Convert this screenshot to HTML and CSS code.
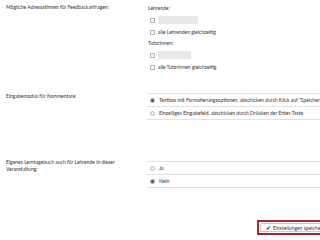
FILE: index.html
```html
<!DOCTYPE html>
<html lang="de">
<head>
    <meta charset="UTF-8">
    <meta name="viewport" content="width=device-width, initial-scale=1.0">
    <title>Einstellungen</title>
    <link rel="stylesheet" href="styles.css">
</head>
<body>

    <div class="page">

        <div class="form-row first">
            <div class="label">Mögliche Adressatinnen für Feedbackanfragen:</div>
            <div class="field checks">
                <div class="sub-title">Lehrende:</div>
                <div class="check-row"><span class="box"></span><span class="name-input"></span></div>
                <div class="check-row"><span class="box"></span>alle Lehrenden gleichzeitig</div>
                <div class="sub-title">TutorInnen:</div>
                <div class="check-row"><span class="box"></span><span class="name-input short"></span></div>
                <div class="check-row"><span class="box"></span>alle TutorInnen gleichzeitig</div>
            </div>
        </div>

        <div class="form-row second">
            <div class="label">Eingabemodus für Kommentare:</div>
            <ul class="field options">
                <li><span class="radio checked"></span>Textbox mit Formatierungsoptionen, abschicken durch Klick auf "Speichern"</li>
                <li><span class="radio"></span>Einzeiliges Eingabefeld, abschicken durch Drücken der Enter-Taste</li>
            </ul>
        </div>

        <div class="form-row third">
            <div class="label">Eigenes Lerntagebuch auch für Lehrende in dieser Veranstaltung:</div>
            <ul class="field options">
                <li><span class="radio"></span>Ja</li>
                <li><span class="radio checked"></span>Nein</li>
            </ul>
        </div>

        <div class="actions">
            <button class="save-btn" type="button"><span class="tick">✔</span>Einstellungen speichern</button>
        </div>

    </div>

</body>
</html>
```

FILE: styles.css
```css
/* Reset */
* {
    margin: 0;
    padding: 0;
    box-sizing: border-box;
}

html, body {
    overflow: hidden;
}

body {
    font-family: Lato, "Open Sans", sans-serif;
    font-size: 5px;
    color: #333;
    background: #fff;
}

.page {
    width: 360px;
}

/* Zeilen des Formulars */
.form-row {
    display: flex;
    align-items: flex-start;
}

.label {
    width: 147px;
    flex-shrink: 0;
    padding: 0 19px 0 6px;
    line-height: 7px;
}

.field {
    flex: 1;
}

.first .label {
    padding-top: 4px;
}

.checks {
    padding: 3px 0 0 1px;
}

.sub-title {
    height: 11px;
    line-height: 11px;
}

.check-row {
    height: 12px;
    display: flex;
    align-items: center;
    padding-left: 2px;
}

.box {
    width: 5px;
    height: 5px;
    border: 1px solid #b4b4b4;
    background: #fafafa;
    margin-right: 3px;
}

.name-input {
    width: 40px;
    height: 8px;
    background: #e8e8e8;
}

.name-input.short {
    width: 33px;
}

/* Radio-Listen */
.second {
    margin-top: 20px;
}

.third {
    margin-top: 41px;
}

.third .label {
    margin-top: -2px;
}

.options {
    list-style: none;
    border-top: 1px solid #e2e2e2;
}

.options li {
    height: 13px;
    display: flex;
    align-items: center;
    padding-left: 3px;
    border-bottom: 1px solid #e2e2e2;
    white-space: nowrap;
}

.radio {
    width: 5px;
    height: 5px;
    border-radius: 50%;
    border: 1px solid #b4b4b4;
    background: #f8f8f8;
    margin-right: 4px;
    flex-shrink: 0;
}

.radio.checked {
    background: radial-gradient(circle, #556 0, #556 1.2px, #dde 1.8px);
    border-color: #99a;
}

/* Speichern */
.actions {
    margin-top: 32px;
    padding-left: 257px;
}

.save-btn {
    font-family: inherit;
    font-size: 5px;
    color: #333;
    height: 15px;
    padding: 0 8px 0 7px;
    background: #fff;
    border: 2px solid #a3272b;
    box-shadow: inset 0 0 0 1px #fff, inset 0 0 0 2px #c8c8c8;
    white-space: nowrap;
    display: flex;
    align-items: center;
}

.tick {
    font-size: 6px;
    color: #222;
    margin-right: 2px;
}
```
